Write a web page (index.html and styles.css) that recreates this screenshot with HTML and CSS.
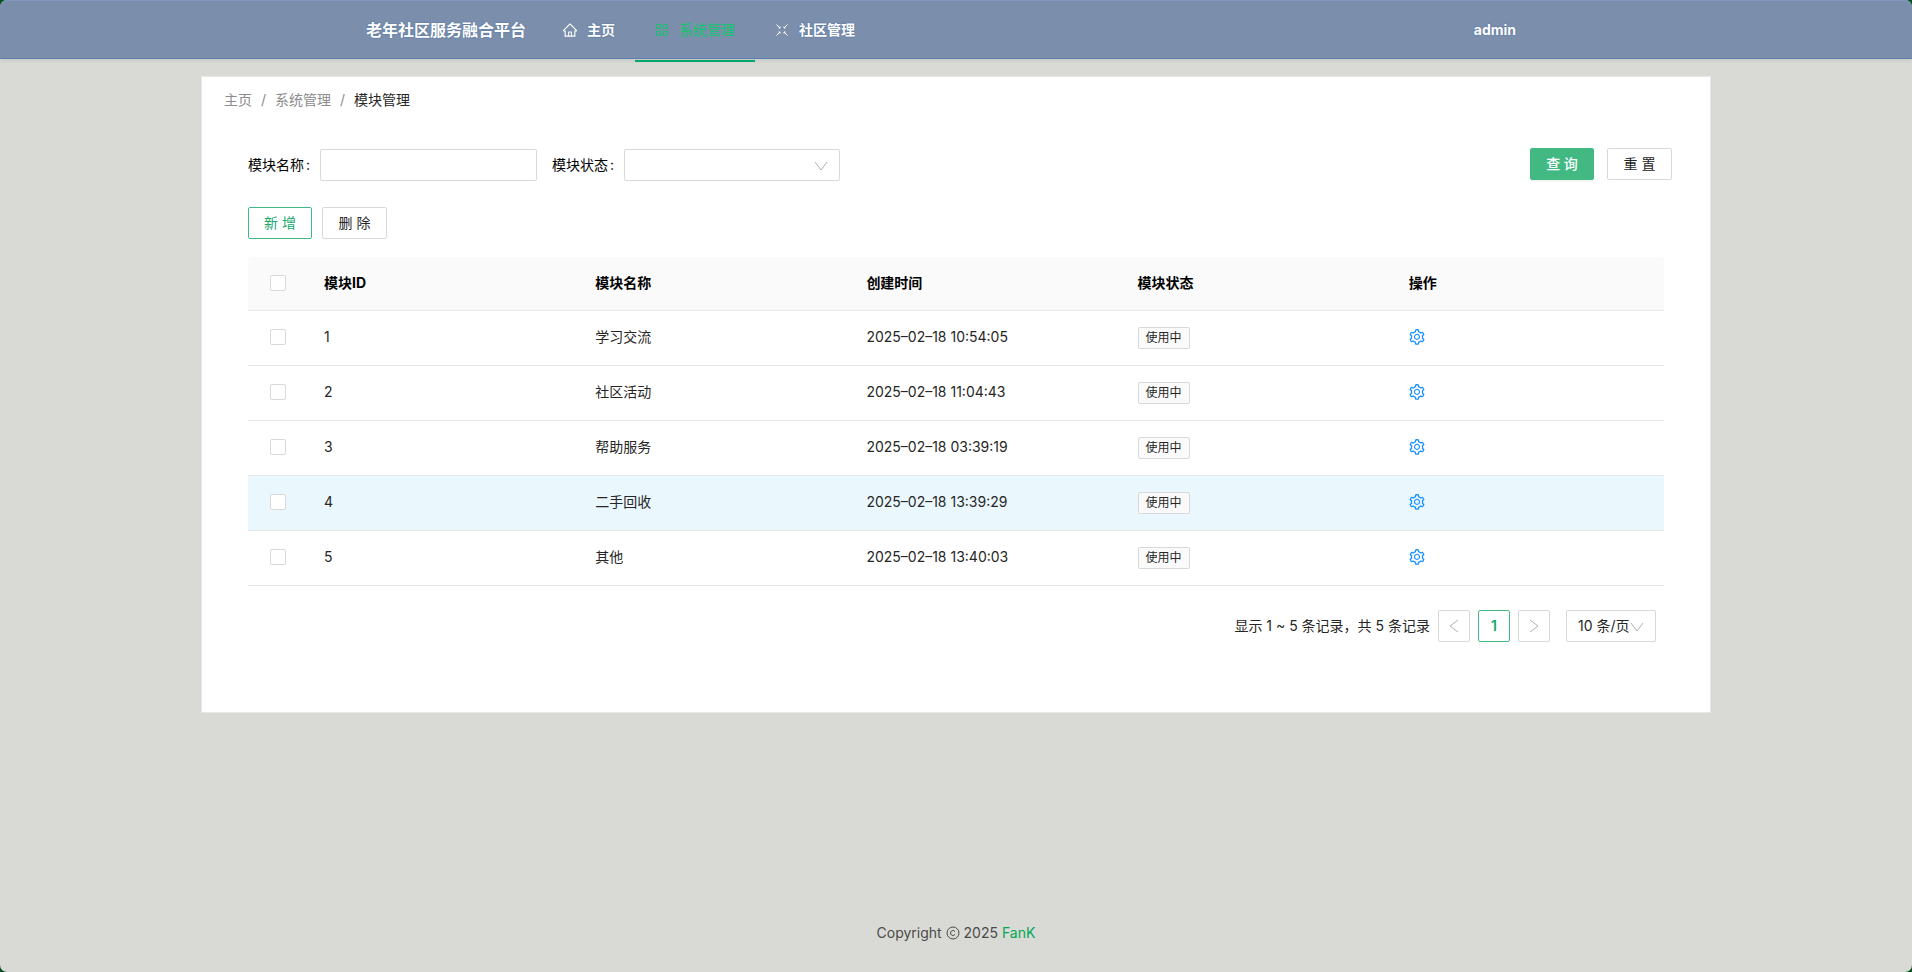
FILE: index.html
```html
<!DOCTYPE html>
<html lang="zh-CN">
<head>
    <meta charset="UTF-8">
    <meta name="viewport" content="width=device-width, initial-scale=1.0">
    <title>老年社区服务融合平台</title>
    <link rel="stylesheet" href="styles.css">
</head>
<body>
    <svg class="sprite" aria-hidden="true">
        <symbol id="icon-home" viewBox="0 0 1024 1024">
            <path d="M946.500 505L560.100 118.800l-25.900-25.900a31.500 31.500 0 0 0-44.400 0L77.500 505a63.900 63.900 0 0 0-18.800 46c.4 35.200 29.700 63.300 64.900 63.300h42.500V940h691.800V614.300h43.400c17.100 0 33.200-6.700 45.300-18.800a63.600 63.600 0 0 0 18.700-45.300c0-17-6.700-33.100-18.800-45.200zM568 868H456V664h112v204zm217.900-325.700V868H632V640c0-22.100-17.900-40-40-40H432c-22.100 0-40 17.900-40 40v228H238.100V542.300h-96l370-369.700 23.100 23.100L882 542.300h-96.100z"/>
        </symbol>
        <symbol id="icon-apps" viewBox="0 0 16 16">
            <path d="M2.500 2.500h4v4h-4zM9.500 2.500h4v4h-4zM2.500 9.500h4v4h-4zM9.500 9.500h4v4h-4z" fill="none" stroke="currentColor"/>
        </symbol>
        <symbol id="icon-shrink" viewBox="0 0 16 16">
            <path d="M2.500 2.500l3.500 3.500M4.500 6h1.500v-1.500M13.500 2.500L10 6M11.500 6H10v-1.500M2.500 13.500L6 10M4.500 10h1.500v1.500M13.500 13.500L10 10M11.500 10H10v1.500" fill="none" stroke="currentColor"/>
        </symbol>
        <symbol id="icon-setting" viewBox="0 0 1024 1024">
            <path d="M924.800 625.700l-65.500-56c3.100-19 4.700-38.400 4.700-57.800s-1.600-38.800-4.700-57.800l65.500-56a32.030 32.030 0 0 0 9.300-35.200l-.9-2.600a443.740 443.740 0 0 0-79.700-137.900l-1.800-2.100a32.120 32.120 0 0 0-35.100-9.500l-81.300 28.900c-30-24.600-63.500-44-99.700-57.600l-15.700-85a32.050 32.050 0 0 0-25.800-25.700l-2.700-.5c-52.100-9.400-106.900-9.400-159 0l-2.700.5a32.050 32.050 0 0 0-25.800 25.700l-15.800 85.400a351.860 351.860 0 0 0-99 57.400l-81.900-29.100a32 32 0 0 0-35.100 9.500l-1.800 2.100a446.020 446.020 0 0 0-79.700 137.900l-.9 2.600c-4.500 12.500-.8 26.500 9.300 35.200l66.300 56.600c-3.100 18.800-4.600 38-4.600 57.100 0 19.200 1.500 38.400 4.600 57.100L99 625.500a32.030 32.030 0 0 0-9.300 35.200l.9 2.600c18.100 50.400 44.900 96.900 79.700 137.900l1.800 2.100a32.120 32.120 0 0 0 35.100 9.500l81.900-29.100c29.800 24.500 63.100 43.900 99 57.400l15.800 85.400a32.050 32.050 0 0 0 25.800 25.700l2.700.5a449.400 449.400 0 0 0 159 0l2.700-.5a32.050 32.050 0 0 0 25.800-25.700l15.700-85a350 350 0 0 0 99.700-57.600l81.300 28.900a32 32 0 0 0 35.100-9.500l1.800-2.100c34.800-41.100 61.600-87.500 79.700-137.900l.9-2.600c4.500-12.300.8-26.300-9.300-35zM788.300 465.900c2.500 15.100 3.800 30.600 3.800 46.100s-1.300 31-3.800 46.100l-6.600 40.100 74.700 63.900a370.030 370.030 0 0 1-42.600 73.600L721 702.800l-31.400 25.800c-23.900 19.600-50.500 35-79.300 45.800l-38.100 14.300-17.900 97a377.500 377.500 0 0 1-85 0l-17.900-97.200-37.800-14.500c-28.500-10.800-55-26.200-78.700-45.700l-31.400-25.900-93.400 33.200c-17-22.900-31.200-47.600-42.600-73.600l75.500-64.500-6.500-40c-2.400-14.900-3.700-30.300-3.700-45.500 0-15.300 1.200-30.600 3.700-45.500l6.500-40-75.500-64.500c11.300-26.100 25.600-50.700 42.600-73.600l93.400 33.200 31.400-25.900c23.700-19.500 50.200-34.900 78.700-45.700l37.900-14.300 17.900-97.200c28.100-3.200 56.800-3.200 85 0l17.900 97 38.100 14.300c28.700 10.800 55.400 26.200 79.300 45.800l31.400 25.800 92.800-32.900c17 22.900 31.200 47.600 42.600 73.600L781.800 426l6.500 39.900zM512 326c-97.200 0-176 78.800-176 176s78.800 176 176 176 176-78.800 176-176-78.800-176-176-176zm79.200 255.200A111.600 111.600 0 0 1 512 614c-29.900 0-58-11.700-79.200-32.800A111.600 111.600 0 0 1 400 502c0-29.900 11.700-58 32.800-79.200C454 401.600 482.100 390 512 390c29.900 0 58 11.600 79.200 32.800A111.600 111.600 0 0 1 624 502c0 29.900-11.700 58-32.800 79.200z"/>
        </symbol>
        <symbol id="icon-down" viewBox="0 0 14 14">
            <path d="M1 3l6 8 6-8" fill="none" stroke="currentColor"/>
        </symbol>
        <symbol id="icon-left" viewBox="0 0 14 14">
            <path d="M11 1L3 7l8 6" fill="none" stroke="currentColor"/>
        </symbol>
        <symbol id="icon-right" viewBox="0 0 14 14">
            <path d="M3 1l8 6-8 6" fill="none" stroke="currentColor"/>
        </symbol>
    </svg>

    <header class="header">
        <div class="header-inner">
            <div class="logo">老年社区服务融合平台</div>
            <nav class="menu">
                <a class="menu-item" href="#"><svg class="icon"><use href="#icon-home"/></svg>主页</a>
                <a class="menu-item active" href="#"><svg class="icon"><use href="#icon-apps"/></svg>系统管理</a>
                <a class="menu-item" href="#"><svg class="icon"><use href="#icon-shrink"/></svg>社区管理</a>
            </nav>
            <a class="user" href="#">admin</a>
        </div>
    </header>

    <main class="content">
        <nav class="breadcrumb">
            <a href="#">主页</a><span class="sep">/</span><a href="#">系统管理</a><span class="sep">/</span><span class="current">模块管理</span>
        </nav>

        <form class="search">
            <label for="moduleName">模块名称<span class="colon">:</span></label>
            <input class="field" type="text" id="moduleName">
            <label for="moduleStatus">模块状态<span class="colon">:</span></label>
            <div class="select-wrap">
                <select class="field" id="moduleStatus">
                    <option></option>
                    <option>使用中</option>
                </select>
                <svg class="icon arrow"><use href="#icon-down"/></svg>
            </div>
            <div class="search-buttons">
                <button type="button" class="btn btn-primary">查 询</button>
                <button type="button" class="btn">重 置</button>
            </div>
        </form>

        <div class="toolbar">
            <button type="button" class="btn btn-ghost">新 增</button>
            <button type="button" class="btn">删 除</button>
        </div>

        <table class="table">
            <thead>
                <tr>
                    <th class="check"><input type="checkbox" aria-label="全选"></th>
                    <th>模块ID</th>
                    <th>模块名称</th>
                    <th>创建时间</th>
                    <th>模块状态</th>
                    <th>操作</th>
                </tr>
            </thead>
            <tbody>
                <tr>
                    <td class="check"><input type="checkbox" aria-label="选择 1"></td>
                    <td>1</td>
                    <td>学习交流</td>
                    <td>2025–02–18 10:54:05</td>
                    <td><span class="tag">使用中</span></td>
                    <td><a class="setting" href="#" aria-label="设置"><svg class="icon"><use href="#icon-setting"/></svg></a></td>
                </tr>
                <tr>
                    <td class="check"><input type="checkbox" aria-label="选择 2"></td>
                    <td>2</td>
                    <td>社区活动</td>
                    <td>2025–02–18 11:04:43</td>
                    <td><span class="tag">使用中</span></td>
                    <td><a class="setting" href="#" aria-label="设置"><svg class="icon"><use href="#icon-setting"/></svg></a></td>
                </tr>
                <tr>
                    <td class="check"><input type="checkbox" aria-label="选择 3"></td>
                    <td>3</td>
                    <td>帮助服务</td>
                    <td>2025–02–18 03:39:19</td>
                    <td><span class="tag">使用中</span></td>
                    <td><a class="setting" href="#" aria-label="设置"><svg class="icon"><use href="#icon-setting"/></svg></a></td>
                </tr>
                <tr class="hover">
                    <td class="check"><input type="checkbox" aria-label="选择 4"></td>
                    <td>4</td>
                    <td>二手回收</td>
                    <td>2025–02–18 13:39:29</td>
                    <td><span class="tag">使用中</span></td>
                    <td><a class="setting" href="#" aria-label="设置"><svg class="icon"><use href="#icon-setting"/></svg></a></td>
                </tr>
                <tr>
                    <td class="check"><input type="checkbox" aria-label="选择 5"></td>
                    <td>5</td>
                    <td>其他</td>
                    <td>2025–02–18 13:40:03</td>
                    <td><span class="tag">使用中</span></td>
                    <td><a class="setting" href="#" aria-label="设置"><svg class="icon"><use href="#icon-setting"/></svg></a></td>
                </tr>
            </tbody>
        </table>

        <div class="pagination">
            <span>显示 1 ~ 5 条记录，共 5 条记录</span>
            <button type="button" class="page" aria-label="上一页"><svg class="icon"><use href="#icon-left"/></svg></button>
            <button type="button" class="page active">1</button>
            <button type="button" class="page" aria-label="下一页"><svg class="icon"><use href="#icon-right"/></svg></button>
            <div class="select-wrap page-size">
                <select class="field" aria-label="每页条数">
                    <option>10 条/页</option>
                    <option>20 条/页</option>
                </select>
                <svg class="icon arrow"><use href="#icon-down"/></svg>
            </div>
        </div>
    </main>

    <footer class="footer">Copyright <svg class="icon copyright" viewBox="0 0 14 14" role="img" aria-label="©"><circle cx="7" cy="7" r="6"/><path d="M9 5.500a2.500 2.500 0 1 0 0 3"/></svg> 2025 <a href="#">FanK</a></footer>
</body>
</html>
```

FILE: styles.css
```css
* {
    box-sizing: border-box;
}
html {
    background: #00521f;
}
body {
    margin: 0;
    min-height: 100vh;
    display: flex;
    flex-direction: column;
    background: #d9dad5;
    border-radius: 7px;
    overflow: hidden;
    font-family: Inter, "Noto Sans CJK SC", sans-serif;
    font-size: 14px;
    line-height: 22px;
    color: #262626;
}
a {
    color: inherit;
    text-decoration: none;
}
button, input, select {
    font: inherit;
    color: inherit;
}
.sprite {
    display: none;
}
.icon {
    width: 14px;
    height: 14px;
    fill: currentColor;
    flex: none;
}

/* header */
.header {
    height: 59px;
    background: #7b8fad;
    border-top: 1px solid #8196bd;
    border-bottom: 1px solid #5b7fae;
    box-shadow: 0 1px 4px rgba(0, 21, 41, 0.12);
}
.header-inner {
    display: flex;
    align-items: center;
    height: 58px;
    margin: 0 366px;
    color: #fff;
    font-weight: 700;
    text-shadow: 0 0 2px #4d6d9c;
}
.logo {
    font-size: 16px;
    margin-right: 17px;
}
.menu {
    display: flex;
}
.menu-item {
    display: flex;
    align-items: center;
    gap: 9px;
    height: 62px;
    padding: 0 20px 0 19px;
    margin-top: 2px;
    border-bottom: 2px solid transparent;
}
.menu-item .icon {
    width: 16px;
    height: 16px;
}
.menu-item.active {
    color: #12c46c;
    font-weight: 400;
    text-shadow: none;
    border-color: #00a76a;
}
.user {
    margin-left: auto;
    margin-right: 30px;
}

/* card */
.content {
    margin: 17px 201px 0;
    padding: 12px 46px 70px;
    background: #fff;
    border: 1px solid #e8e8e8;
}
.breadcrumb {
    margin-left: -24px;
    color: #8c8c8c;
}
.breadcrumb .sep {
    margin: 0 9px;
}
.breadcrumb .current {
    color: #262626;
}
.search {
    display: flex;
    align-items: center;
    margin-top: 37px;
}
.search label {
    width: 72px;
    color: #000;
}
.colon {
    margin-left: 2px;
}
.field {
    width: 217px;
    height: 32px;
    padding: 0 11px;
    border: 1px solid #d9d9d9;
    border-radius: 2px;
    background: #fff;
    outline: none;
    appearance: none;
}
#moduleName {
    margin-right: 15px;
}
#moduleStatus {
    width: 216px;
}
.select-wrap {
    display: flex;
    position: relative;
}
.select-wrap .arrow {
    position: absolute;
    right: 12px;
    top: 10px;
    color: #b0b0b0;
    pointer-events: none;
}
.search-buttons {
    display: flex;
    gap: 13px;
    margin-left: auto;
    margin-right: -8px;
    margin-bottom: 2px;
}
.toolbar {
    display: flex;
    gap: 10px;
    margin: 25px 0 18px;
}
.btn {
    width: 65px;
    height: 32px;
    padding: 0;
    border: 1px solid #d9d9d9;
    border-radius: 2px;
    background: #fff;
    line-height: 28px;
    cursor: pointer;
}
.btn-primary {
    width: 64px;
    border-color: #42b983;
    background: #42b983;
    color: #fff;
    font-weight: 500;
    box-shadow: 0 2px 0 rgba(0, 0, 0, 0.04);
}
.btn-ghost {
    width: 64px;
    border-color: #42b983;
    color: #18a86b;
}

/* table */
.table {
    width: 100%;
    table-layout: fixed;
    border-collapse: separate;
    border-spacing: 0;
}
.table th, .table td {
    height: 55px;
    padding: 0 16px 2px;
    border-bottom: 1px solid #e8e8e8;
    text-align: left;
}
.table th {
    height: 54px;
    background: #fafafa;
    color: #000;
    font-weight: 700;
}
.table th:first-child {
    border-top-left-radius: 4px;
}
.table th:last-child {
    border-top-right-radius: 4px;
}
.table .check {
    width: 60px;
    padding: 0 22px 2px;
}
.table input {
    display: block;
    width: 16px;
    height: 16px;
    margin: 0;
    appearance: none;
    background: #fff;
    border: 1px solid #d9d9d9;
    border-radius: 2px;
}
.table .hover td {
    background: #eaf8fe;
}
.tag {
    display: inline-block;
    height: 22px;
    padding: 0 7px;
    border: 1px solid #d9d9d9;
    border-radius: 2px;
    background: #fafafa;
    font-size: 12px;
    line-height: 20px;
}
.setting {
    color: #1890ff;
}
.setting .icon {
    display: block;
    width: 18px;
    height: 18px;
    margin-left: -1px;
}

/* pagination */
.pagination {
    display: flex;
    align-items: center;
    justify-content: flex-end;
    gap: 8px;
    margin: 24px 8px 0 0;
}
.page {
    display: flex;
    align-items: center;
    justify-content: center;
    width: 32px;
    height: 32px;
    padding: 0;
    border: 1px solid #d9d9d9;
    border-radius: 2px;
    background: #fff;
    color: #b0b0b0;
}
.page.active {
    border-color: #42b983;
    color: #18a86b;
    font-weight: 600;
}
.page-size {
    margin-left: 8px;
}
.page-size .field {
    width: 90px;
}

/* footer */
.footer {
    margin-top: auto;
    padding-bottom: 28px;
    text-align: center;
    color: #4a4a4a;
}
.footer a {
    color: #00a854;
}
.copyright {
    fill: none;
    stroke: currentColor;
    vertical-align: -2px;
}
```
